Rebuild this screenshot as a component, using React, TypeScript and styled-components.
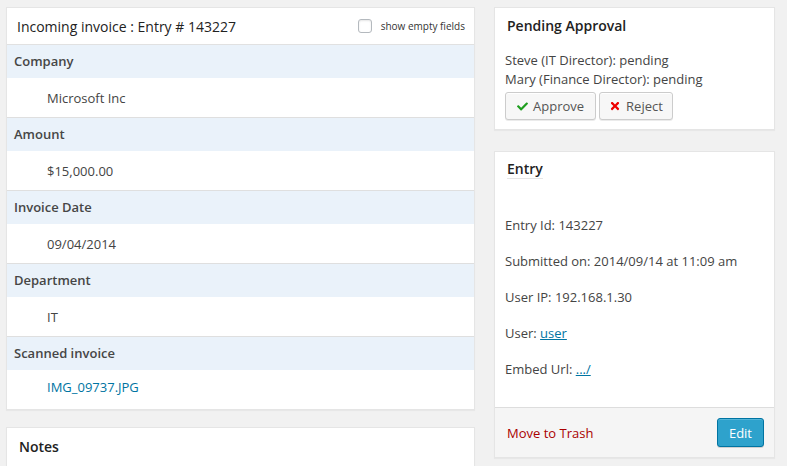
import React from "react";
import styled, { createGlobalStyle } from "styled-components";
import { FaCheck, FaTimes } from "react-icons/fa";

const Global = createGlobalStyle`
  html, body { margin: 0; padding: 0; }
  body {
    background: #f1f1f1;
    font-family: "Open Sans", "Liberation Sans", sans-serif;
    font-size: 13px;
    color: #444;
    overflow: hidden;
  }
`;

const Page = styled.div`
  display: flex;
  align-items: flex-start;
  gap: 19px;
  padding: 7px 0 0 6px;
  width: 787px;
  height: 466px;
  box-sizing: border-box;
`;

const Column = styled.div<{ $width: number; $gap: number }>`
  width: ${(p) => p.$width}px;
  display: flex;
  flex-direction: column;
  gap: ${(p) => p.$gap}px;
  flex-shrink: 0;
`;

const Panel = styled.div`
  background: #fff;
  border: 1px solid #e5e5e5;
  box-shadow: 0 1px 1px rgba(0, 0, 0, 0.04);
`;

const EntryHeader = styled.div`
  height: 36px;
  display: flex;
  align-items: center;
  justify-content: space-between;
  padding: 0 9px 0 10px;
  border-bottom: 1px solid #e1e1e1;
`;

const EntryTitle = styled.span`
  font-size: 14px;
  color: #222;
`;

const ToggleLabel = styled.label`
  display: flex;
  align-items: center;
  gap: 9px;
  font-size: 10px;
  color: #333;
`;

const Checkbox = styled.span`
  width: 14px;
  height: 14px;
  box-sizing: border-box;
  border: 1px solid #b4b9be;
  border-radius: 3px;
  background: #fff;
  box-shadow: inset 0 1px 2px rgba(0, 0, 0, 0.1);
  margin-top: -1px;
`;

const FieldName = styled.div`
  height: 32px;
  padding-bottom: 1px;
  display: flex;
  align-items: center;
  padding-left: 7px;
  background: #eaf2fa;
  font-weight: 600;
  color: #464646;
`;

const FieldValue = styled.div<{ $last?: boolean }>`
  height: ${(p) => (p.$last ? 33 : 39)}px;
  padding-bottom: ${(p) => (p.$last ? 6 : 0)}px;
  display: flex;
  align-items: center;
  padding-left: 40px;
  color: #444;
  border-bottom: ${(p) => (p.$last ? "none" : "1px solid #dfdfdf")};
`;

const Link = styled.a`
  color: #0074a2;
  text-decoration: none;
`;

const UnderLink = styled.a`
  color: #0074a2;
  text-decoration: underline;
`;

const BoxTitle = styled.h3<{ $pt: number; $px: number }>`
  margin: 0;
  padding: ${(p) => p.$pt}px ${(p) => p.$px}px 0;
  font-size: 14px;
  font-weight: 600;
  line-height: 19px;
  color: #222;
`;

const Underlined = styled.span`
  display: inline-block;
  border-bottom: 1px solid #e5e5e5;
`;

const NotesBody = styled.div`
  height: 60px;
`;

const PendingBody = styled.div`
  padding: 16px 10px 9px;
  line-height: 19px;
`;

const ButtonRow = styled.div`
  display: flex;
  gap: 3px;
  margin-top: 3px;
`;

const Button = styled.button<{ $px: number }>`
  height: 28px;
  box-sizing: border-box;
  display: inline-flex;
  align-items: center;
  gap: 5px;
  padding: 0 ${(p) => p.$px}px;
  font-family: inherit;
  font-size: 13px;
  color: #555;
  background: #f7f7f7;
  border: 1px solid #ccc;
  border-radius: 3px;
  box-shadow: inset 0 1px 0 #fff, 0 1px 0 rgba(0, 0, 0, 0.08);
`;

const Icon = styled.span<{ $color: string; $size: number }>`
  display: inline-flex;
  color: ${(p) => p.$color};
  font-size: ${(p) => p.$size}px;
`;

const EntryBody = styled.div`
  display: flex;
  flex-direction: column;
  gap: 17px;
  padding: 37px 10px 28px;
  line-height: 19px;
`;

const Footer = styled.div`
  height: 49px;
  display: flex;
  align-items: center;
  justify-content: space-between;
  padding: 0 10px 0 12px;
  background: #f5f5f5;
  border-top: 1px solid #dddddd;
`;

const TrashLink = styled.a`
  color: #a00;
  text-decoration: none;
`;

const PrimaryButton = styled.button`
  height: 29px;
  box-sizing: border-box;
  padding: 0 11px;
  font-family: inherit;
  font-size: 13px;
  color: #fff;
  background: #2ea2cc;
  border: 1px solid #0074a2;
  border-radius: 3px;
  box-shadow: inset 0 1px 0 rgba(120, 200, 230, 0.5), 0 1px 0 rgba(0, 0, 0, 0.15);
`;

const fields = [
  { name: "Company", value: "Microsoft Inc" },
  { name: "Amount", value: "$15,000.00" },
  { name: "Invoice Date", value: "09/04/2014" },
  { name: "Department", value: "IT" },
  { name: "Scanned invoice", value: "IMG_09737.JPG", link: true },
];

export default function App() {
  return (
    <>
      <Global />
      <Page>
        <Column $width={469} $gap={17}>
          <Panel>
            <EntryHeader>
              <EntryTitle>Incoming invoice : Entry # 143227</EntryTitle>
              <ToggleLabel>
                <Checkbox />
                show empty fields
              </ToggleLabel>
            </EntryHeader>
            {fields.map((f, i) => (
              <React.Fragment key={f.name}>
                <FieldName>{f.name}</FieldName>
                <FieldValue $last={i === fields.length - 1}>
                  {f.link ? <Link href="#">{f.value}</Link> : f.value}
                </FieldValue>
              </React.Fragment>
            ))}
          </Panel>
          <Panel>
            <BoxTitle $pt={9} $px={12}>Notes</BoxTitle>
            <NotesBody />
          </Panel>
        </Column>
        <Column $width={281} $gap={21}>
          <Panel>
            <BoxTitle $pt={8} $px={12}>Pending Approval</BoxTitle>
            <PendingBody>
              <div>Steve (IT Director): pending</div>
              <div>Mary (Finance Director): pending</div>
              <ButtonRow>
                <Button $px={11}>
                  <Icon $color="#1e9e1e" $size={11}>
                    <FaCheck />
                  </Icon>
                  Approve
                </Button>
                <Button $px={9}>
                  <Icon $color="#e00" $size={12}>
                    <FaTimes />
                  </Icon>
                  Reject
                </Button>
              </ButtonRow>
            </PendingBody>
          </Panel>
          <Panel>
            <BoxTitle $pt={7} $px={12}>
              <Underlined>Entry</Underlined>
            </BoxTitle>
            <EntryBody>
              <div>Entry Id: 143227</div>
              <div>Submitted on: 2014/09/14 at 11:09 am</div>
              <div>User IP: 192.168.1.30</div>
              <div>
                User: <UnderLink href="#">user</UnderLink>
              </div>
              <div>
                Embed Url: <UnderLink href="#">.../</UnderLink>
              </div>
            </EntryBody>
            <Footer>
              <TrashLink href="#">Move to Trash</TrashLink>
              <PrimaryButton>Edit</PrimaryButton>
            </Footer>
          </Panel>
        </Column>
      </Page>
    </>
  );
}
